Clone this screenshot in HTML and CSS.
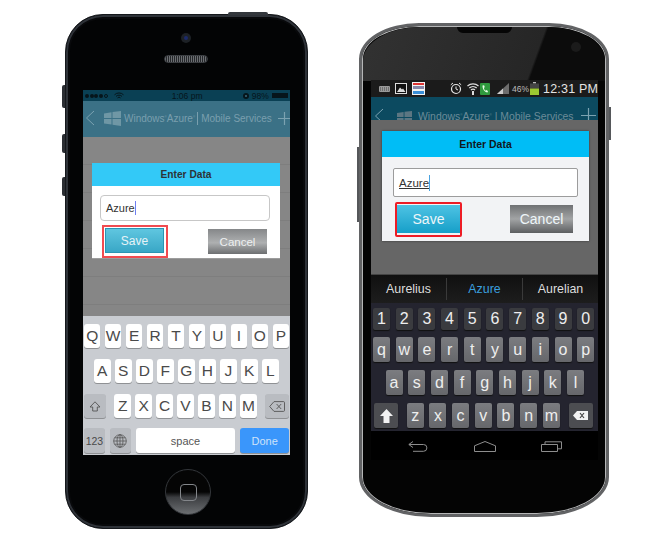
FILE: index.html
```html
<!DOCTYPE html>
<html lang="en">
<head>
<meta charset="utf-8">
<title>Enter Data</title>
<link rel="stylesheet" href="styles.css">
</head>
<body>
<main class="stage">

  <section class="iphone">
    <i class="ip-top-btn"></i><i class="ip-side s1"></i><i class="ip-side s2"></i><i class="ip-side s3"></i>
    <div class="ip-cam"><i></i></div>
    <div class="ip-speaker"></div>
    <div class="ip-screen">
      <div class="ip-status">
        <span class="ip-dots"><i></i><i></i><i></i><i></i><i class="off"></i></span>
        <svg class="ip-wifi" width="10" height="8" viewBox="0 0 10 8"><path d="M.5 2.8a6.4 6.4 0 0 1 9 0M2 4.4a4.2 4.2 0 0 1 6 0M3.5 5.9a2 2 0 0 1 3 0" fill="none" stroke="#06151b" stroke-width="1"/></svg>
        <span class="ip-time">1:06 pm</span>
        <svg class="ip-lock" width="6" height="6" viewBox="0 0 6 6"><circle cx="3" cy="3" r="3" fill="#06151b"/><circle cx="3" cy="3" r="1" fill="#3b6a7c"/></svg>
        <span class="ip-pct">98%</span>
        <span class="ip-batt"></span>
      </div>
      <div class="ip-nav">
        <svg class="ip-back" width="10" height="16" viewBox="0 0 10 16"><path d="M9 1 1.5 8 9 15" fill="none" stroke="#7ba2b1" stroke-width="1"/></svg>
        <svg class="ip-logo" width="17" height="15" viewBox="0 0 17 15"><path d="M0 2.5 7.5 1.2V7H0zM8.5 1 17 0v7H8.5zM0 8h7.5v5.6L0 12.6zM8.5 8H17v7l-8.5-1.3z" fill="#6f97a5"/></svg>
        <span class="ip-brand">Windows<sup>®</sup>Azure<sup>®</sup></span>
        <span class="ip-sep"></span>
        <span class="ip-brand">Mobile Services</span>
        <svg class="ip-plus" width="13" height="13" viewBox="0 0 13 13"><path d="M6.5 0v13M0 6.5h13" stroke="#7ba2b1" stroke-width="1.2"/></svg>
      </div>
      <div class="ip-content">
        <div class="ip-dialog">
          <h2 class="ip-title">Enter Data</h2>
          <div class="ip-input">Azure<i class="ip-caret"></i></div>
          <div class="ip-actions">
            <div class="ip-mark"><button class="ip-btn ip-save">Save</button></div>
            <button class="ip-btn ip-cancel">Cancel</button>
          </div>
        </div>
      </div>
      <div class="ip-kb">
        <div class="ip-row"><b class="ik">Q</b><b class="ik">W</b><b class="ik">E</b><b class="ik">R</b><b class="ik">T</b><b class="ik">Y</b><b class="ik">U</b><b class="ik">I</b><b class="ik">O</b><b class="ik">P</b></div>
        <div class="ip-row r2"><b class="ik">A</b><b class="ik">S</b><b class="ik">D</b><b class="ik">F</b><b class="ik">G</b><b class="ik">H</b><b class="ik">J</b><b class="ik">K</b><b class="ik">L</b></div>
        <div class="ip-row r3">
          <b class="ik fn wide"><svg width="12" height="11" viewBox="0 0 12 11"><path d="M6 .8 11 6H8.3v4H3.7V6H1z" fill="none" stroke="#555" stroke-width=".9"/></svg></b>
          <b class="ik">Z</b><b class="ik">X</b><b class="ik">C</b><b class="ik">V</b><b class="ik">B</b><b class="ik">N</b><b class="ik">M</b>
          <b class="ik fn wide del"><svg width="16" height="11" viewBox="0 0 16 11"><path d="M5 .6h9.6a1 1 0 0 1 .9 1v7.8a1 1 0 0 1-.9 1H5L.7 5.5zM7.6 3l4.6 5M12.2 3 7.6 8" fill="none" stroke="#555" stroke-width=".9"/></svg></b>
        </div>
        <div class="ip-row r4">
          <b class="ik fn k123">123</b>
          <b class="ik fn kglobe"><svg width="14" height="14" viewBox="0 0 14 14"><g fill="none" stroke="#555" stroke-width=".8"><circle cx="7" cy="7" r="6.3"/><ellipse cx="7" cy="7" rx="3" ry="6.3"/><path d="M7 .7v12.6M.7 7h12.6M1.6 3.8h10.8M1.6 10.2h10.8"/></g></svg></b>
          <b class="ik kspace">space</b>
          <b class="ik kdone">Done</b>
        </div>
      </div>
    </div>
    <div class="ip-home"><i></i></div>
  </section>

  <section class="android">
    <i class="an-side"></i><i class="an-side-r"></i>
    <div class="an-shine"></div>
    <div class="an-notch"></div>
    <div class="an-cam"></div>
    <div class="an-screen">
      <div class="an-status">
        <svg class="si kbd" width="11" height="6" viewBox="0 0 11 6"><rect width="11" height="6" rx="1" fill="#9a9a9a"/><path d="M1 2h9M1 4h9" stroke="#444" stroke-dasharray="1 1"/></svg>
        <svg class="si pic" width="12" height="11" viewBox="0 0 12 11"><rect x=".5" y=".5" width="11" height="10" fill="#111" stroke="#ddd"/><path d="M2 9 5 4.5l2 2 1-1L10.5 9z" fill="#ddd"/></svg>
        <svg class="si cal" width="13" height="13" viewBox="0 0 13 13"><rect width="13" height="13" fill="#f3f3f3"/><rect x="1" y="1" width="11" height="2" fill="#d33"/><rect x="1" y="4" width="11" height="3" fill="#88a"/><rect x="1" y="9" width="11" height="3" fill="#3a8fd8"/></svg>
        <svg class="si alarm" width="12" height="13" viewBox="0 0 12 13"><circle cx="6" cy="7" r="4.5" fill="none" stroke="#e5e5e5" stroke-width="1.2"/><path d="M6 4.5V7l2 1M.8 2.8 3 1M11.2 2.8 9 1" fill="none" stroke="#e5e5e5"/></svg>
        <svg class="si wifi" width="12" height="13" viewBox="0 0 12 13"><path d="M.5 4a8 8 0 0 1 11 0M2.3 6a5.4 5.4 0 0 1 7.4 0M4 8a2.8 2.8 0 0 1 4 0" fill="none" stroke="#ddd" stroke-width="1.2"/><path d="M5 9h2v4H5z" fill="#ddd"/></svg>
        <svg class="si phone" width="10" height="12" viewBox="0 0 10 12"><rect width="10" height="12" rx="1" fill="#2f9a3e"/><path d="M2.5 2.5c0 4 2 6.5 5 7l.5-1.500-1.800-1-.8.700C4.500 7 4 6 3.900 4.800l.9-.6-.7-2z" fill="#e8ffe8"/></svg>
        <svg class="si signal" width="12" height="11" viewBox="0 0 12 11"><path d="M0 11 12 0v11z" fill="#6d6d6d"/><path d="M0 11l6-5.5V11z" fill="#ccc"/></svg>
        <span class="an-pct">46%</span>
        <svg class="si batt" width="9" height="13" viewBox="0 0 9 13"><path d="M3 0h3v1.5H3z" fill="#bbb"/><rect y="1.5" width="9" height="5" fill="#444"/><rect y="6.5" width="9" height="6.5" fill="#9bc832"/></svg>
        <span class="an-time">12:31 PM</span>
      </div>
      <div class="an-nav">
        <svg class="an-back" width="10" height="16" viewBox="0 0 10 16"><path d="M9 1 1.5 8 9 15" fill="none" stroke="#7ba2b1" stroke-width="1"/></svg>
        <svg class="an-logo" width="15" height="15" viewBox="0 0 17 15"><path d="M0 2.5 7.5 1.2V7H0zM8.5 1 17 0v7H8.5zM0 8h7.5v5.6L0 12.6zM8.5 8H17v7l-8.5-1.3z" fill="#5c7682"/></svg>
        <span class="an-brand">Windows<sup>®</sup>Azure<sup>®</sup> | Mobile Services</span>
        <svg class="an-plus" width="15" height="15" viewBox="0 0 15 15"><path d="M7.5 0v15M0 7.5h15" stroke="#7ba2b1" stroke-width="1.2"/></svg>
      </div>
      <div class="an-content">
        <div class="an-dialog">
          <h2 class="an-title">Enter Data</h2>
          <div class="an-input"><u>Azure</u><i class="an-caret"></i></div>
          <div class="an-actions">
            <div class="an-mark"><button class="an-btn an-save">Save</button></div>
            <button class="an-btn an-cancel">Cancel</button>
          </div>
        </div>
      </div>
      <div class="an-sugg"><span>Aurelius</span><span class="sel">Azure</span><span>Aurelian</span></div>
      <div class="an-kb">
        <div class="an-row nums"><b class="ak">1</b><b class="ak">2</b><b class="ak">3</b><b class="ak">4</b><b class="ak">5</b><b class="ak">6</b><b class="ak">7</b><b class="ak">8</b><b class="ak">9</b><b class="ak">0</b></div>
        <div class="an-row"><b class="ak">q</b><b class="ak">w</b><b class="ak">e</b><b class="ak">r</b><b class="ak">t</b><b class="ak">y</b><b class="ak">u</b><b class="ak">i</b><b class="ak">o</b><b class="ak">p</b></div>
        <div class="an-row ar2"><b class="ak">a</b><b class="ak">s</b><b class="ak">d</b><b class="ak">f</b><b class="ak">g</b><b class="ak">h</b><b class="ak">j</b><b class="ak">k</b><b class="ak">l</b></div>
        <div class="an-row ar3">
          <b class="ak afn shift"><svg width="13" height="14" viewBox="0 0 13 14"><path d="M6.5 0 13 7H9.5v7h-6V7H0z" fill="#f2f2f2"/></svg></b>
          <b class="ak">z</b><b class="ak">x</b><b class="ak">c</b><b class="ak">v</b><b class="ak">b</b><b class="ak">n</b><b class="ak">m</b>
          <b class="ak afn adel"><svg width="15" height="9" viewBox="0 0 15 9"><path d="M4 0h11v9H4L0 4.5z" fill="#f2f2f2"/><path d="M7 2l4 5M11 2 7 7" stroke="#444" stroke-width="1.2"/></svg></b>
        </div>
      </div>
      <div class="an-softkeys">
        <svg width="20" height="11" viewBox="0 0 20 11"><path d="M5 .5.800 3.500 5 6.500M1 3.500h14.500a3.300 3.300 0 0 1 0 6.800H5" fill="none" stroke="#8d8d8d"/></svg>
        <svg width="22" height="11" viewBox="0 0 22 11"><path d="M.5 4.800 11 .5l10.500 4.300v5.700H.5z" fill="none" stroke="#8d8d8d"/></svg>
        <svg width="21" height="11" viewBox="0 0 21 11"><path d="M.5 3.500h16v7H.5zM4 3.300V.8h16.500v7h-3.800" fill="none" stroke="#8d8d8d"/></svg>
      </div>
    </div>
  </section>

</main>
</body>
</html>
```

FILE: styles.css
```css
* { box-sizing: border-box; }
html, body { margin: 0; padding: 0; background: #fff; }
body { font-family: "Liberation Sans", Arial, sans-serif; }
i { display: block; font-style: normal; }
b { font-weight: normal; }
h2 { margin: 0; }
button { font-family: inherit; border: 0; padding: 0; display: block; }
svg { flex: none; }

.stage { display: flex; align-items: flex-start; width: 672px; height: 540px; overflow: hidden; padding: 14px 0 0 65px; }

/* iPhone */
.iphone { position: relative; flex: none; width: 243px; height: 515px; padding: 75px 0 0 17px; border-radius: 38px; background: #030405; border: 1px solid #15181c; box-shadow: inset 0 0 0 2px #2e3238, inset 0 0 0 4px #08090b; }
.ip-top-btn { position: absolute; left: 162px; top: -3px; width: 40px; height: 3px; background: #33373c; border-radius: 2px 2px 0 0; }
.ip-side { position: absolute; left: -4px; width: 3px; background: #2b2e33; border-radius: 2px 0 0 2px; }
.s1 { top: 70px; height: 23px; }
.s2 { top: 119px; height: 19px; }
.s3 { top: 162px; height: 19px; }
.ip-cam { position: absolute; left: 115px; top: 18px; width: 10px; height: 10px; border-radius: 50%; background: #1d2126; display: flex; align-items: center; justify-content: center; }
.ip-cam i { width: 4px; height: 4px; border-radius: 50%; background: #1c2a6b; }
.ip-speaker { position: absolute; left: 98px; top: 40px; width: 44px; height: 8px; border-radius: 4px; background: repeating-linear-gradient(90deg, #6b6e72 0 1px, #26282b 1px 2px); border: 1px solid #3a3d41; }
.ip-screen { width: 207px; height: 365px; display: flex; flex-direction: column; overflow: hidden; background: #868686; }

.ip-status { flex: none; height: 11px; background: #0a4054; display: flex; align-items: center; padding: 0 2px; color: #06151b; font-size: 8.5px; white-space: nowrap; }
.ip-dots { display: flex; gap: .7px; flex: none; }
.ip-dots i { width: 4px; height: 4px; border-radius: 50%; background: #06151b; }
.ip-dots i.off { background: none; border: .5px solid #06151b; }
.ip-wifi { margin-left: 6px; }
.ip-time { margin-left: 48px; width: 44px; flex: none; }
.ip-lock { margin-left: 27px; }
.ip-pct { margin-left: 3px; }
.ip-batt { margin-left: 3px; width: 16px; height: 5px; background: #06151b; flex: none; }

.ip-nav { flex: none; height: 36px; background: #3b7186; display: flex; align-items: center; color: #7a9fae; font-size: 10px; padding-bottom: 2px; }
.ip-back { margin-left: 2px; }
.ip-logo { margin-left: 9px; }
.ip-brand { margin-left: 3px; white-space: nowrap; }
.ip-brand sup { font-size: 3px; }
.ip-sep { width: 1px; height: 13px; background: #7a9fae; margin: 0 0 0 2px; flex: none; }
.ip-plus { margin-left: 6px; }

.ip-content { flex: none; height: 179px; padding: 26px 0 0 9px; background: #868686 repeating-linear-gradient(180deg, #868686 0 27px, #7e7e7e 27px 28px); }
.ip-dialog { width: 188px; height: 96px; background: #fff; border-bottom: 1px solid #9c9c9c; }
.ip-title { height: 23px; background: #33c9f7; color: #2d3236; font-size: 10.2px; font-weight: bold; line-height: 23px; text-align: center; }
.ip-input { position: relative; height: 26px; width: 170px; margin: 9px 0 0 8px; border: 1px solid #c7c7c7; border-radius: 4px; color: #333; font-size: 11px; line-height: 24px; padding-left: 5px; display: flex; align-items: center; }
.ip-caret { width: 1px; height: 14px; background: #6f7ff0; }
.ip-actions { display: flex; justify-content: space-between; align-items: center; margin-top: 4px; padding: 0 13px 0 10px; }
.ip-mark { width: 66px; height: 33px; border: 2px solid #f14b50; padding: 1px; }
.ip-btn { width: 59px; height: 25px; color: #e7f3f7; font-size: 11.5px; }
.ip-save { background: linear-gradient(180deg, #5fc6e0, #39a7c6); border: 1px solid #2a95b4; font-size: 12px; }
.ip-cancel { background: linear-gradient(180deg, #858789 0, #aeb0b1 55%, #6d6f71 100%); color: #eef0f0; }

.ip-kb { flex: 1; background: #c9ccd1; padding: 8px 1px 0 1px; display: flex; flex-direction: column; gap: 11px; }
.ip-row { display: flex; gap: 4.5px; height: 24px; }
.r2 { padding-left: 10px; }
.r4 { height: 25px; gap: 5px; margin-top: -1px; }
.ik { width: 16.5px; height: 24px; background: #fff; border-radius: 3px; box-shadow: 0 1px 0 #8f9194; color: #4a4a4a; font-size: 15.5px; display: flex; align-items: center; justify-content: center; }
.r4 .ik { height: 25px; }
.ik.fn { background: #b9bcc1; }
.wide { width: 22px; margin-right: 4px; }
.del { margin: 0 0 0 4px; width: 24px; }
.ik.k123 { width: 21px; font-size: 10.5px; }
.kglobe { width: 21px; }
.ik.kspace { width: 100px; font-size: 11px; color: #555; }
.ik.kdone { width: 49px; background: #3a96fb; color: #cfe3f9; font-size: 11px; }

.ip-home { position: absolute; left: 99px; top: 454px; width: 46px; height: 46px; border-radius: 50%; background: linear-gradient(180deg, #050505 0 50%, #3b3d40 62%, #6c6f72 100%); border: 1px solid #33363a; display: flex; align-items: center; justify-content: center; }
.ip-home i { width: 17px; height: 17px; border: 1px solid #83868a; border-radius: 4px; }

/* Android */
.android { position: relative; flex: none; width: 250px; height: 494px; margin: 9px 0 0 51px; padding: 54px 0 0 9px; border: 3px solid #626365; border-radius: 60px 60px 72px 72px / 36px 36px 40px 40px; background: #040404; box-shadow: inset 0 0 0 1px #b5b6b7; }
.an-side { position: absolute; left: -5px; top: 121px; width: 2px; height: 75px; background: #55575a; }
.an-side-r { position: absolute; right: -5px; top: 81px; width: 2px; height: 33px; background: #55575a; }
.an-shine { position: absolute; left: 1px; top: 1px; right: 1px; height: 54px; border-radius: 58px 58px 0 0 / 34px 34px 0 0; background: linear-gradient(110deg, #323232 0, #262626 70%, #0c0c0c 71%, #0c0c0c 100%); }
.an-notch { position: absolute; left: 95px; top: 1px; width: 55px; height: 6px; background: #050505; border-radius: 0 0 8px 8px; }
.an-cam { position: absolute; left: 209px; top: 16px; width: 10px; height: 10px; border-radius: 50%; background: #1b1b1b; }
.an-screen { position: relative; width: 227px; height: 380px; background: #000; display: flex; flex-direction: column; }

.an-status { flex: none; height: 17px; background: #1b1b1b; display: flex; align-items: center; padding-left: 8px; color: #e4e4e4; white-space: nowrap; }
.pic { margin-left: 5px; }
.cal { margin-left: 5px; }
.alarm { margin-left: 25px; }
.wifi { margin-left: 5px; }
.phone { margin-left: 1px; }
.signal { margin-left: 7px; }
.an-pct { font-size: 8.5px; margin-left: 3px; color: #bdbdbd; }
.batt { margin-left: 1px; }
.an-time { font-size: 12.5px; margin-left: 4px; white-space: nowrap; letter-spacing: .2px; }

.an-nav { flex: none; height: 23px; background: #0c4a60; display: flex; align-items: flex-start; overflow: hidden; color: #6b8b98; font-size: 10.4px; }
.an-back { margin: 11px 0 0 3px; }
.an-logo { margin: 13px 0 0 13px; }
.an-brand { margin: 14px 0 0 6px; white-space: nowrap; width: 156px; flex: none; }
.an-brand sup { font-size: 3px; }
.an-plus { margin: 11px 0 0 7px; }

.an-content { flex: none; height: 155px; background: #666; padding: 11px 0 0 11px; border-bottom: 1px solid #444; }
.an-dialog { width: 207px; height: 110px; background: #f2f3f5; box-shadow: 0 0 2px #333; }
.an-title { height: 26px; background: #00bdf6; color: #10181c; font-size: 10.5px; font-weight: bold; line-height: 26px; text-align: center; }
.an-input { height: 29px; width: 185px; margin: 11px 0 0 11px; background: #fff; border: 1px solid #9c9c9c; border-radius: 2px; color: #333; font-size: 11.5px; padding-left: 5px; display: flex; align-items: center; }
.an-caret { width: 1px; height: 16px; background: #4aa3e0; }
.an-actions { display: flex; justify-content: space-between; margin-top: 5px; padding: 0 16px 0 13px; }
.an-mark { width: 67px; height: 35px; border: 2px solid #ee1c25; border-radius: 2px; padding: 1px 0; }
.an-btn { width: 63px; height: 28px; color: #eef6f9; font-size: 14px; }
.an-cancel { margin-top: 3px; background: linear-gradient(180deg, #6f7173 0, #a2a4a5 50%, #5d5f61 100%); }
.an-save { background: linear-gradient(180deg, #4ec3e4, #169fc8); }

.an-sugg { flex: none; height: 28px; background: linear-gradient(180deg, #101010, #1d1d1d); display: flex; align-items: center; color: #ddd; font-size: 12.4px; }
.an-sugg span { flex: 1; text-align: center; line-height: 22px; }
.an-sugg span + span { border-left: 1px solid #3a3a3a; }
.an-sugg .sel { color: #3a9fde; }

.an-kb { flex: none; height: 128px; background: #24242f; padding: 5px 1px 0 2px; display: flex; flex-direction: column; gap: 7px; }
.an-row { display: flex; gap: 5.7px; height: 25px; }
.an-row.nums { height: 22px; }
.ar2 { padding-left: 12.5px; margin-top: 1px; }
.ar3 { margin-top: 1px; }
.ak { width: 17px; height: 100%; border-radius: 2px; background: linear-gradient(180deg, #7b7c80, #66676b); box-shadow: 0 1px 1px #111; color: #eee; font-size: 16px; display: flex; align-items: center; justify-content: center; }
.nums .ak { background: #3a3b3f; }
.ak.afn { background: #4c4d51; }
.shift { width: 24px; margin: 0 3px 0 1px; }
.adel { width: 24px; margin-left: 3px; }

.an-softkeys { flex: 1; background: #000; display: flex; justify-content: space-between; align-items: flex-start; padding: 10px 36px 0 37px; }
```
